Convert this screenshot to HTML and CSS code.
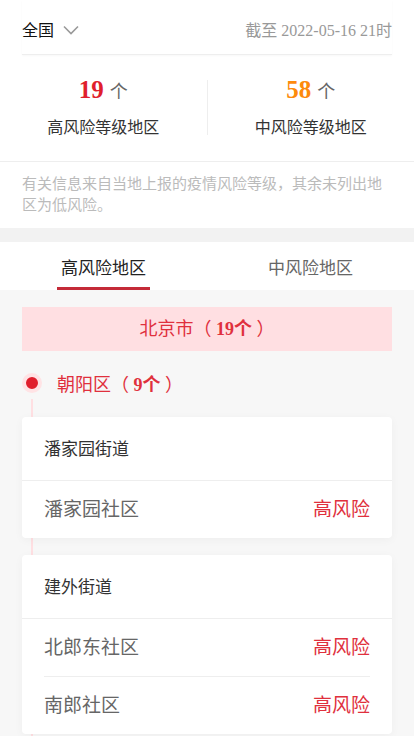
FILE: index.html
```html
<html lang="zh-CN">

<head>
    <meta charset="utf-8" />
    <meta name="viewport" content="width=device-width, initial-scale=1.0">
    <title>疫情风险等级查询</title>
    <link rel="stylesheet" href="styles.css">
</head>

<body>
    <div class="summary">
        <div class="summary-head">
            <div class="area-select">
                <span>全国</span>
                <svg class="chevron" width="16" height="10" viewBox="0 0 16 10">
                    <path d="M1 1.5 L8 8.5 L15 1.5" fill="none" stroke="#999" stroke-width="1.6" />
                </svg>
            </div>
            <div class="update-time">截至 2022-05-16 21时</div>
        </div>
        <div class="stats">
            <div class="stat">
                <div class="stat-value"><b class="num-high">19</b> <span class="unit">个</span></div>
                <div class="stat-label">高风险等级地区</div>
            </div>
            <div class="stat-divider"></div>
            <div class="stat">
                <div class="stat-value"><b class="num-mid">58</b> <span class="unit">个</span></div>
                <div class="stat-label">中风险等级地区</div>
            </div>
        </div>
        <div class="note">有关信息来自当地上报的疫情风险等级，其余未列出地区为低风险。</div>
    </div>

    <div class="tabs">
        <div class="tab tab-active">高风险地区</div>
        <div class="tab">中风险地区</div>
    </div>

    <div class="list">
        <div class="city">北京市（ <b>19个</b> ）</div>

        <div class="district">
            <div class="district-title">
                <span class="dot"></span>
                <span>朝阳区（ <b>9个</b> ）</span>
            </div>

            <div class="card">
                <div class="card-head">潘家园街道</div>
                <div class="card-row">
                    <span class="place">潘家园社区</span>
                    <span class="level">高风险</span>
                </div>
            </div>

            <div class="card">
                <div class="card-head">建外街道</div>
                <div class="card-row">
                    <span class="place">北郎东社区</span>
                    <span class="level">高风险</span>
                </div>
                <div class="card-row">
                    <span class="place">南郎社区</span>
                    <span class="level">高风险</span>
                </div>
            </div>
        </div>
    </div>
</body>

</html>
```

FILE: styles.css
```css
body {
    margin: 0;
    background-color: #f7f7f7;
    font-family: "Liberation Serif", "Noto Sans CJK SC", serif;
    color: #333;
}

.summary {
    background-color: #fff;
    padding: 0 22px;
    border-bottom: 14px solid #f2f2f2;
}

.summary-head {
    height: 55px;
    display: flex;
    align-items: center;
    justify-content: space-between;
    border-bottom: 1px solid #eee;
    box-shadow: 0 1px 2px rgba(0, 0, 0, 0.03);
    padding-top: 4px;
    box-sizing: border-box;
}

.area-select {
    display: flex;
    align-items: center;
    font-size: 16px;
    color: #111;
}

.chevron {
    margin-left: 9px;
    margin-top: 1px;
}

.update-time {
    font-size: 16px;
    color: #999;
}

.stats {
    display: flex;
    align-items: center;
    margin: 0 -22px;
    padding: 20px 0 22px;
    border-bottom: 1px solid #eee;
}

.stat {
    flex: 1;
    text-align: center;
}

.stat-value {
    height: 30px;
    line-height: 30px;
}

.stat-value b {
    font-size: 25px;
}

.num-high {
    color: #e01f2d;
}

.num-mid {
    color: #fd8a0c;
}

.unit {
    font-size: 18px;
    color: #666;
    margin-left: 2px;
}

.stat-label {
    margin-top: 12px;
    font-size: 16px;
    line-height: 22px;
}

.stat-divider {
    width: 1px;
    height: 55px;
    background-color: #eee;
}

.note {
    font-size: 15px;
    line-height: 21px;
    color: #bbb;
    padding: 12px 0;
}

.tabs {
    display: flex;
    background-color: #fff;
    height: 48px;
}

.tab {
    flex: 1;
    display: flex;
    justify-content: center;
    align-items: center;
    font-size: 17px;
    color: #666;
    position: relative;
}

.tab-active {
    color: #222;
}

.tab-active::after {
    content: "";
    position: absolute;
    bottom: 0;
    left: 57px;
    width: 93px;
    height: 3px;
    background-color: #c42a38;
}

.list {
    padding: 17px 22px 0;
}

.city {
    height: 44px;
    line-height: 44px;
    text-align: center;
    font-size: 18px;
    color: #e0303d;
    background-color: #ffdfe2;
}

.district {
    position: relative;
    padding-bottom: 20px;
}

/* timeline rail */
.district::before {
    content: "";
    position: absolute;
    left: 9px;
    top: 32px;
    bottom: 0;
    width: 2px;
    background-color: #ffdfe2;
}

.district-title {
    display: flex;
    align-items: center;
    height: 32px;
    margin: 16px 0 18px;
    font-size: 18px;
    color: #e0303d;
}

.dot {
    width: 20px;
    height: 20px;
    box-sizing: border-box;
    border: 4px solid #ffe3e5;
    border-radius: 50%;
    background-color: #e01f2d;
    margin-right: 15px;
}

.card {
    position: relative;
    background-color: #fff;
    border-radius: 4px;
    box-shadow: 0 2px 10px rgba(0, 0, 0, 0.04);
    margin-bottom: 17px;
}

.card-head {
    padding: 22px 22px 19px;
    line-height: 22px;
    font-size: 17px;
    color: #333;
    border-bottom: 1px solid #eee;
}

.card-row {
    display: flex;
    justify-content: space-between;
    margin: 0 22px;
    padding: 16px 0;
    line-height: 25px;
    font-size: 19px;
}

.card-row + .card-row {
    border-top: 1px solid #eee;
}

.place {
    color: #666;
}

.level {
    color: #e0303d;
}
```
